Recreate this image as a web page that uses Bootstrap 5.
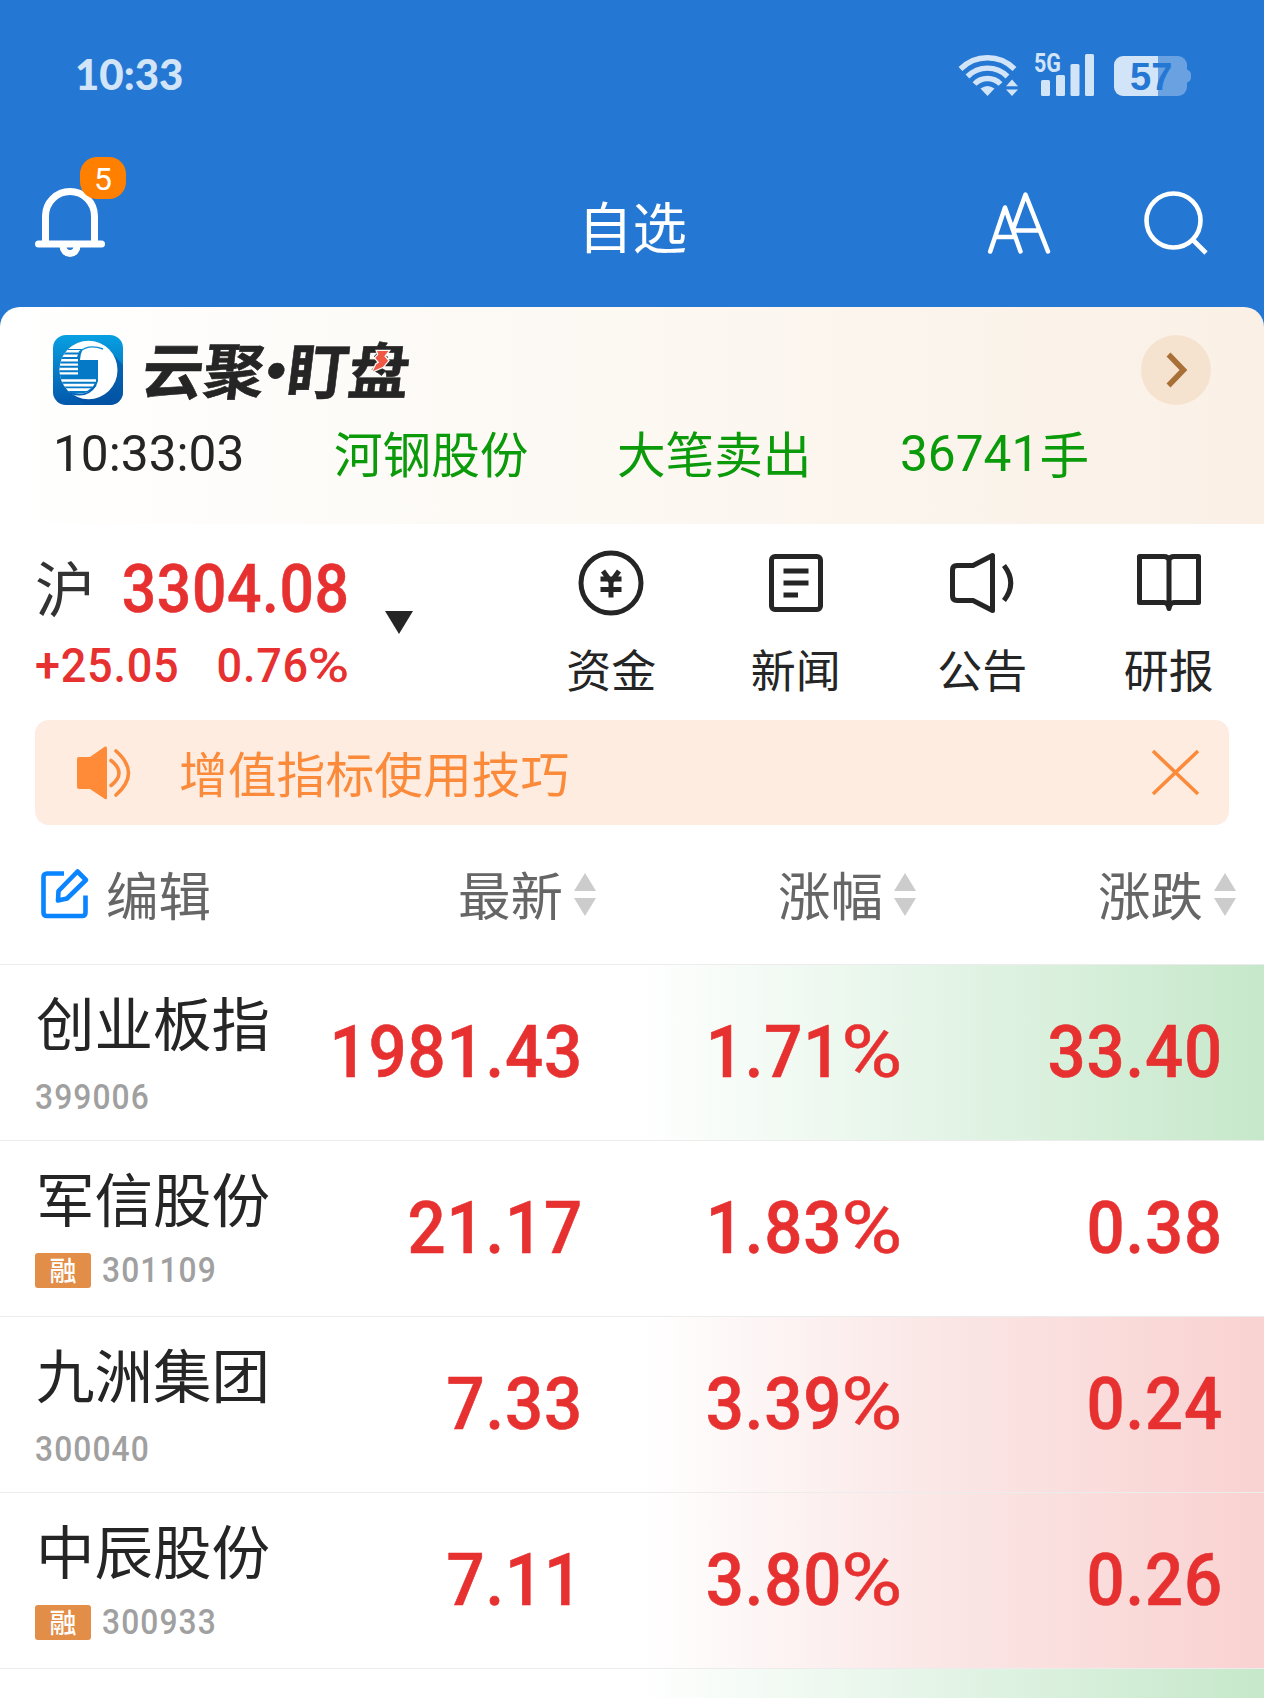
<!DOCTYPE html>
<html lang="zh-CN">
<head>
<meta charset="utf-8">
<meta name="viewport" content="width=device-width, initial-scale=1">
<title>自选</title>
<link rel="stylesheet" href="https://cdn.jsdelivr.net/npm/bootstrap@5.3.0/dist/css/bootstrap.min.css">
<style>
  :root { --brand: #2577d4; --up: #e73030; --ink: #252525; --muted: #666; --hint: #fb8b3b; }
  body { width: 1264px; height: 1698px; overflow: hidden; background: #fff; color: var(--ink); line-height: 1;
         font-family: "Noto Sans CJK SC", sans-serif; }
  svg { display: block; flex: none; overflow: visible; }
  .num { font-family: Roboto, "Noto Sans CJK SC", sans-serif; font-weight: 500; white-space: nowrap; }
  .narrow-l { transform: scaleX(.92); transform-origin: left center; }
  .narrow-r { transform: scaleX(.92); transform-origin: right center; }
  .pct { display: inline-block; transform: scaleX(1.24); transform-origin: right center; margin-left: .16em; font-weight: 400; -webkit-text-stroke: .5px currentColor; }
  .top-area { background: var(--brand); color: #fff; }

  .status-bar { height: 150px; padding: 0 73px 2px 75px; color: #d2e4f7; }
  .status-time { font: 900 42px/1 Lato, sans-serif; letter-spacing: 0; }
  .status-icons { padding-top: 2px; }
  .label-5g { font-family: Roboto, sans-serif; font-weight: 700; }
  .label-batt { font-family: "Liberation Sans", sans-serif; font-weight: 700; }

  .title-bar { height: 145px; margin-bottom: 12px; padding: 0 56px 0 35px; }
  .page-title { font-size: 54.5px; font-weight: 400; padding-top: 4px; margin: 0 0 0 22px; }
  .bell-wrap { width: 72px; height: 70px; }
  .bell-badge { left: 45px; top: -31px; width: 46px; height: 42px; border-radius: 17px; background: #ff7f00;
                font: 400 32px/45px Roboto, sans-serif; }
  .font-icon { margin-right: 94px; }

  .watch-panel { height: 217px; padding: 28px 53px 0; border-radius: 20px 20px 0 0; color: var(--ink);
                 background: linear-gradient(90deg, #fff 0%, #fcf8f2 50%, #faf0e6 100%); }
  .brand-word { margin-left: 20px; font-size: 61px; font-weight: 700; -webkit-text-stroke: .6px var(--ink); height: 70px; line-height: 65px; transform: skewX(-7deg); }
  .brand-word .mid-dot { width: 23px; }
  .bolt { left: 24px; top: 15px; }
  .go-btn { width: 70px; height: 70px; background: #f5e3d0; }
  .go-btn svg { margin-left: 2px; }
  .ticker { margin-top: 17px; height: 60px; font-size: 48.6px; color: #0a9a0a; }
  .ticker > div { width: 283px; white-space: nowrap; }
  .ticker > div:first-child { width: 281px; }
  .ticker .num { font-weight: 400; font-size: 49.6px; padding-top: 5px; }
  .ticker .clock { color: var(--ink); }
  .hand { vertical-align: -3px; line-height: 0; }

  .index-row { height: 196px; }
  .index-box { width: 518px; padding: 25px 0 0 35px; }
  .index-lines { width: 315px; color: var(--up); }
  .index-main { height: 80px; }
  .index-main .market { font-size: 60px; color: #333; margin: -6px 0 0 0; }
  .index-main .num { font-size: 66px; letter-spacing: .6px; padding-top: 1px; -webkit-text-stroke: .5px var(--up); }
  .index-sub { height: 73px; }
  .index-sub .num { font-size: 49px; letter-spacing: .8px; }
  .drop-mark { margin: 62px 0 0 35px; }
  .tool-label { font-size: 45px; height: 60px; line-height: 57px; margin-top: 23px; }
  .tool-icon { height: 68px; margin-top: 25px; }

  .notice { margin: 0 35px; height: 105px; padding: 0 30px 0 42px; border-radius: 14px; background: #feece0; color: var(--hint); }
  .notice-text { margin: -1px 0 0 48px; font-size: 48.8px; }

  .quote-grid { display: grid; grid-template-columns: 277px 320px 320px 347px; align-items: center; }
  .head-row { height: 139px; color: var(--muted); font-size: 52.5px; padding-bottom: 3px; }
  .head-cell { gap: 11px; padding-right: 1px; }
  .head-cell svg { margin-top: 3px; }
  .head-row .head-cell:nth-child(4) { padding-right: 28px; }
  .edit-cell { padding-left: 40px; gap: 18px; }
  .edit-cell svg { margin-top: 2px; }
  .stock-row { height: 176px; border-top: 1.5px solid #ececec; }
  .peek-row { height: 30px; }
  .stock-row .num.price { font-size: 73px; letter-spacing: .9px; color: var(--up); text-align: right; -webkit-text-stroke: .6px var(--up); }
  .price.c1, .price.c2 { margin-right: 14px; }
  .price.c3 { margin-right: 41px; }
  .flash-down { background: linear-gradient(90deg, #fff 50.5%, #e3f4e6 75%, #c6e8ca 100%); }
  .flash-up { background: linear-gradient(90deg, #fff 50.5%, #fae6e5 75%, #f9d2d1 100%); }
  .name-cell { align-self: start; padding: 16px 0 0 35px; }
  .stock-name { font-size: 58.5px; height: 84px; line-height: 80px; white-space: nowrap; margin-left: 1px; }
  .stock-code { font-size: 34.5px; letter-spacing: 1.2px; color: #a0a0a0; font-weight: 500; }
  .code-line { height: 40px; margin-top: 12px; gap: 11px; }
  .code-line.tagged { margin-top: 9px; }
  .margin-tag { width: 56px; height: 35px; border-radius: 3px; background: #e28e49; color: #fff; font-size: 27px; line-height: 33px; font-weight: 500; }
</style>
<script src="https://cdn.jsdelivr.net/npm/bootstrap@5.3.0/dist/js/bootstrap.bundle.min.js"></script>
</head>
<body>
<header class="top-area">
  <div class="status-bar d-flex align-items-center justify-content-between">
    <span class="status-time">10:33</span>
    <div class="status-icons d-flex align-items-center">
      <svg width="232" height="44" viewBox="0 0 232 44" fill="#d2e4f7">
        <g fill="none" stroke="#d2e4f7" stroke-width="5.4">
          <path d="M1.500 16A38 38 0 0 1 55.500 16"/>
          <path d="M8.500 23.500A28 28 0 0 1 48.500 23.500"/>
          <path d="M15.500 31A18 18 0 0 1 41.500 31"/>
        </g>
        <path d="M21.500 35.500Q28.500 30.500 35.500 35.500L28.500 43z"/>
        <path d="M47 33.200L53 26.500L59 33.200zM47 36.500H59L53 43z"/>
        <text class="label-5g" x="75" y="18.500" font-size="25" textLength="27" lengthAdjust="spacingAndGlyphs">5G</text>
        <rect x="82" y="27" width="9" height="16" rx="1.500"/>
        <rect x="97" y="22" width="9" height="21" rx="1.500"/>
        <rect x="111.500" y="11" width="9" height="32" rx="1.500"/>
        <rect x="126" y="1" width="9" height="42" rx="1.500"/>
        <path d="M228 16.500q4 1.500 4 5v3q0 3.500-4 5z" fill="#69a1e1"/>
        <path d="M199 3h20a9 9 0 0 1 9 9v22a9 9 0 0 1-9 9h-20z" fill="#69a1e1"/>
        <path d="M199 3h-35a9 9 0 0 0-9 9v22a9 9 0 0 0 9 9h35z"/>
        <text class="label-batt" x="171" y="37" font-size="38" fill="#2577d4">57</text>
      </svg>
    </div>
  </div>
  <nav class="title-bar d-flex align-items-center justify-content-between">
    <div class="col d-flex">
      <div class="bell-wrap position-relative">
        <svg width="70" height="70" viewBox="0 0 70 70" fill="none" stroke="#fff" stroke-width="7">
          <path d="M10.500 54V28a24.500 24.500 0 0 1 49 0V54"/>
          <path d="M3.500 56H66.500" stroke-linecap="round"/>
          <path d="M28 58a7 7.500 0 0 0 14 0"/>
        </svg>
        <span class="bell-badge position-absolute text-center text-white">5</span>
      </div>
    </div>
    <h1 class="page-title">自选</h1>
    <div class="col d-flex justify-content-end align-items-center">
      <svg class="font-icon" width="62" height="62" viewBox="0 0 62 62" fill="none" stroke="#fff" stroke-width="4.500" stroke-linejoin="round" stroke-linecap="round">
        <path d="M2.200 59.500L17 15.500L32.500 59.500M9 45H27"/>
        <path d="M25.500 36L37.500 2.500L60 59.500M27 38.500H51"/>
      </svg>
      <svg width="64" height="64" viewBox="0 0 64 64" fill="none" stroke="#fff" stroke-width="4.600">
        <circle cx="29.500" cy="29.500" r="27"/>
        <path d="M48 48L62 62"/>
      </svg>
    </div>
  </nav>

  <section class="watch-panel">
    <div class="d-flex align-items-center">
      <svg width="70" height="70" viewBox="0 0 70 70">
        <defs>
          <linearGradient id="logoBlue" x1="0" y1="0" x2="0" y2="1">
            <stop offset="0" stop-color="#08a0e2"/><stop offset="1" stop-color="#0357ab"/>
          </linearGradient>
          <clipPath id="logoDisc"><ellipse cx="35.500" cy="35" rx="29" ry="29.200"/></clipPath>
        </defs>
        <rect width="70" height="70" rx="13" fill="url(#logoBlue)"/>
        <path d="M56 15L70 30V57a13 13 0 0 1-13 13H32L20 60z" fill="#034f9f" opacity=".6"/>
        <ellipse cx="35.500" cy="35" rx="29" ry="29.200" fill="#fff"/>
        <g clip-path="url(#logoDisc)">
          <path d="M0 14H30Q27 19 27 25H45V46Q42 57 28 58.500L0 60z" fill="#0579c6"/>
          <g fill="#fff">
            <path d="M0 15H28L25.500 17.600H0zM0 19.500H25L24 22H0zM0 24H25V26.400H0zM0 28.400H25V30.800H0zM0 32.800H25V35.200H0zM0 37.200H25V39.600H0zM0 44.200H43V46.800H0zM0 48.800H41.500L40 51.400H0zM0 53.200H38L34 56H0z"/>
          </g>
        </g>
        <path d="M26 17Q36 8.500 50 14" fill="none" stroke="#0a8fd4" stroke-width="1.400"/>
        <path d="M17 58Q34 64 43 50" fill="none" stroke="#0462b5" stroke-width="1.400"/>
      </svg>
      <div class="brand-word d-flex">
        <span>云聚</span><span class="mid-dot d-flex justify-content-center">·</span><span>盯</span>
        <span class="position-relative">盘
          <svg class="bolt position-absolute" width="14" height="23" viewBox="0 0 16 24"><path d="M2 0H15L11 6L16 11L11 18L0 23L3 15L6 13L1 8L4 4z" fill="#ee5844" stroke="#fdfaf7" stroke-width="3" paint-order="stroke"/></svg>
        </span>
      </div>
      <button type="button" class="go-btn btn border-0 rounded-circle ms-auto p-0 d-flex align-items-center justify-content-center" aria-label="更多">
        <svg width="22" height="34" viewBox="0 0 22 34" fill="none" stroke="#a86f36" stroke-width="5.500"><path d="M2.500 1.500L17.500 17L2.500 32.500"/></svg>
      </button>
    </div>
    <div class="ticker d-flex align-items-center">
      <div class="num clock">10:33:03</div>
      <div>河钢股份</div>
      <div>大笔卖出</div>
      <div class="num">36741<span class="hand">手</span></div>
    </div>
  </section>
</header>

<main>
  <section class="index-row d-flex">
    <div class="index-box d-flex align-items-start">
      <div class="index-lines">
        <div class="index-main d-flex align-items-center justify-content-between"><span class="market">沪</span><span class="num narrow-r">3304.08</span></div>
        <div class="index-sub d-flex align-items-center justify-content-between"><span class="num narrow-l">+25.05</span><span class="num narrow-r">0.76<span class="pct">%</span></span></div>
      </div>
      <svg class="drop-mark" width="28" height="23" viewBox="0 0 28 23"><path d="M0 0H28L14 23z" fill="#252525"/></svg>
    </div>
    <div class="flex-fill row g-0 row-cols-4 text-center">
      <div class="col">
        <div class="tool-icon d-flex align-items-center justify-content-center">
          <svg width="66" height="66" viewBox="0 0 66 66" fill="none" stroke="#252525" stroke-width="5"><circle cx="33" cy="33" r="30"/><path d="M25 21L33 32L41 21M33 30V47.500M22.500 29H43.500M22.500 39.500H43.500"/></svg>
        </div>
        <div class="tool-label">资金</div>
      </div>
      <div class="col">
        <div class="tool-icon d-flex align-items-center justify-content-center pe-1">
          <svg width="54" height="58" viewBox="0 0 54 58" fill="none" stroke="#252525" stroke-width="5"><rect x="2.500" y="2.500" width="49" height="53" rx="3.500"/><path d="M14.500 17H39.500M14.500 29H39.500M14.500 41H29"/></svg>
        </div>
        <div class="tool-label pe-1">新闻</div>
      </div>
      <div class="col">
        <div class="tool-icon d-flex align-items-center justify-content-center pe-1">
          <svg width="64" height="60" viewBox="0 0 64 60" fill="none" stroke="#252525" stroke-width="5" stroke-linejoin="round"><path d="M2.500 17Q2.500 12.500 7 12.500H23L42.500 2.500V57.500L23 47.500H7Q2.500 47.500 2.500 43z"/><path d="M54 12.500Q67.500 30 54 47.500"/></svg>
        </div>
        <div class="tool-label pe-1">公告</div>
      </div>
      <div class="col">
        <div class="tool-icon d-flex align-items-center justify-content-center pe-1">
          <svg width="64" height="58" viewBox="0 0 64 58" fill="none" stroke="#252525" stroke-width="5" stroke-linejoin="round"><path d="M32 6Q31 2.500 27 2.500H2.500V48.500H27Q31 48.500 32 54.500Q33 48.500 37 48.500H61.500V2.500H37Q33 2.500 32 6zM32 6V55"/></svg>
        </div>
        <div class="tool-label pe-1">研报</div>
      </div>
    </div>
  </section>

  <section class="notice d-flex align-items-center">
    <svg width="54" height="54" viewBox="0 0 54 54"><path d="M2 11H13L28 .5Q30 0 30 2V52Q30 54 28 53L13 43H2Q0 43 0 41V13Q0 11 2 11z" fill="#ff8a38"/><path d="M34 14.500Q50 27 34 39.500M39 5Q64 27 39 49" fill="none" stroke="#fb8b3b" stroke-width="3.600" stroke-linecap="round"/></svg>
    <span class="notice-text">增值指标使用技巧</span>
    <svg class="ms-auto" width="47" height="45" viewBox="0 0 47 45" fill="none" stroke="#fb8b3b" stroke-width="3.600"><path d="M1 1L46 44M46 1L1 44"/></svg>
  </section>

  <section>
    <div class="quote-grid head-row">
      <div class="edit-cell d-flex align-items-center">
        <svg width="48" height="50" viewBox="0 0 48 50" fill="none" stroke="#0a84ff" stroke-width="4.600" stroke-linejoin="round"><path d="M24 4.500H7Q3.500 4.500 3.500 8V43.500Q3.500 47 7 47H42Q45.500 47 45.500 43.500V26.500"/><path d="M37.500 2.500L46 11L27 29.500L18 31.500L18.500 22z"/></svg>
        <span>编辑</span>
      </div>
      <div class="head-cell d-flex align-items-center justify-content-end">最新<svg width="22" height="44" viewBox="0 0 22 44" fill="#ccc"><path d="M11 0L22 18H0zM0 25H22L11 43z"/></svg></div>
      <div class="head-cell d-flex align-items-center justify-content-end">涨幅<svg width="22" height="44" viewBox="0 0 22 44" fill="#ccc"><path d="M11 0L22 18H0zM0 25H22L11 43z"/></svg></div>
      <div class="head-cell d-flex align-items-center justify-content-end">涨跌<svg width="22" height="44" viewBox="0 0 22 44" fill="#ccc"><path d="M11 0L22 18H0zM0 25H22L11 43z"/></svg></div>
    </div>

    <div class="quote-grid stock-row flash-down">
      <div class="name-cell"><div class="stock-name">创业板指</div><div class="code-line d-flex align-items-center"><span class="num stock-code narrow-l">399006</span></div></div>
      <div class="num price c1 narrow-r">1981.43</div><div class="num price c2 narrow-r">1.71<span class="pct">%</span></div><div class="num price c3 narrow-r">33.40</div>
    </div>
    <div class="quote-grid stock-row">
      <div class="name-cell"><div class="stock-name">军信股份</div><div class="code-line tagged d-flex align-items-center"><span class="margin-tag text-center">融</span><span class="num stock-code narrow-l">301109</span></div></div>
      <div class="num price c1 narrow-r">21.17</div><div class="num price c2 narrow-r">1.83<span class="pct">%</span></div><div class="num price c3 narrow-r">0.38</div>
    </div>
    <div class="quote-grid stock-row flash-up">
      <div class="name-cell"><div class="stock-name">九洲集团</div><div class="code-line d-flex align-items-center"><span class="num stock-code narrow-l">300040</span></div></div>
      <div class="num price c1 narrow-r">7.33</div><div class="num price c2 narrow-r">3.39<span class="pct">%</span></div><div class="num price c3 narrow-r">0.24</div>
    </div>
    <div class="quote-grid stock-row flash-up">
      <div class="name-cell"><div class="stock-name">中辰股份</div><div class="code-line tagged d-flex align-items-center"><span class="margin-tag text-center">融</span><span class="num stock-code narrow-l">300933</span></div></div>
      <div class="num price c1 narrow-r">7.11</div><div class="num price c2 narrow-r">3.80<span class="pct">%</span></div><div class="num price c3 narrow-r">0.26</div>
    </div>
    <div class="stock-row peek-row flash-down"></div>
  </section>
</main>
</body>
</html>
